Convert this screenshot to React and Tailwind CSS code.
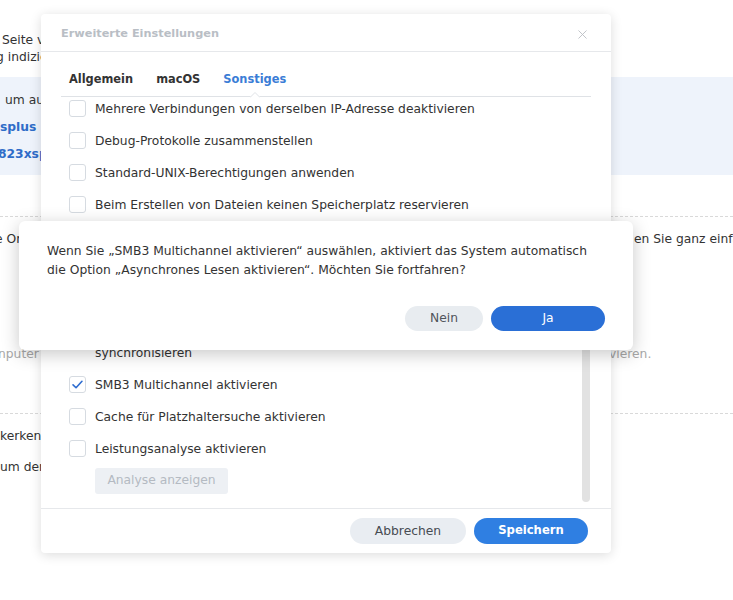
import { X } from "lucide-react";

const Checkbox = ({ checked }) => (
  <span className="mt-[1.5px] flex h-[17px] w-[17px] shrink-0 items-center justify-center rounded-[3px] border border-[#d6dbe1] bg-white">
    {checked && (
      <svg width="13" height="13" viewBox="0 0 16 16" fill="none">
        <path
          d="M2.5 8.5 L6.2 12 L13.5 4"
          stroke="#2f6dd0"
          strokeWidth="2"
          strokeLinecap="round"
          strokeLinejoin="round"
        />
      </svg>
    )}
  </span>
);

const Row = ({ checked, children }) => (
  <div className="flex items-start gap-[9px] py-[6px] leading-[20px]">
    <Checkbox checked={checked} />
    <div>{children}</div>
  </div>
);

const Background = () => (
  <div className="whitespace-nowrap">
    <div className="pt-[31.5px] leading-[17px]">
      <div className="h-[17px] pl-[2px]">Seite verwenden, um die Dateien</div>
      <div className="-ml-[4px] h-[17px]">g indiziert werden</div>
    </div>
    <div className="mt-[11.5px] h-[98px] bg-[#eef3fb] pt-[9.5px] leading-[27px]">
      <div className="pl-[5px]">um auf die Dateien zuzugreifen</div>
      <div className="font-bold text-[#2f6cc8]">splus</div>
      <div className="-ml-[2px] font-bold text-[#2f6cc8]">823xsplus</div>
    </div>
    <div className="mt-[41px] border-t border-dashed border-[#d9d9d9]" />
    <div className="mt-[13.5px] flex h-[17px] leading-[17px]">
      <div className="w-[634px] shrink-0 overflow-hidden">
        <span className="-ml-[5px] inline-block">e Ordner freigeben</span>
      </div>
      <div>en Sie ganz einfach</div>
    </div>
    <div className="mt-[98px] flex h-[17px] leading-[17px] text-[#a8a8a8]">
      <div className="w-[609px] shrink-0 overflow-hidden">
        <span className="-ml-[2px] inline-block">nputer</span>
      </div>
      <div>vieren.</div>
    </div>
    <div className="mt-[50.5px] border-t border-dashed border-[#d9d9d9]" />
    <div className="mt-[14px] h-[17px] leading-[17px]">kerkennung</div>
    <div className="mt-[14px] h-[17px] leading-[17px]">um den Zugriff</div>
  </div>
);

const SettingsDialog = () => (
  <div className="absolute left-[41px] top-[14px] flex h-[539px] w-[570px] flex-col rounded-[4px] bg-white shadow-[0_2px_12px_rgba(0,0,0,0.14)]">
    <div className="flex h-[38px] shrink-0 items-center justify-between border-b border-[#e6e8eb] pl-[20px] pr-[21px] pt-[3px]">
      <span className="text-[11.3px] font-bold text-[#b9bec5]">Erweiterte Einstellungen</span>
      <X size={15} strokeWidth={1.4} className="text-[#b9bdc2]" />
    </div>
    <div className="mx-[20px] flex h-[45px] shrink-0 gap-[23px] border-b border-[#dfe2e6] pl-[8px] pt-[19px] text-[11.4px] font-bold leading-[17px]">
      <span>Allgemein</span>
      <span>macOS</span>
      <span className="relative text-[#3b7dd6]">
        Sonstiges
        {/* small caret in the tab line under the active tab */}
        <svg
          className="absolute left-1/2 top-[20px] -translate-x-1/2"
          width="10"
          height="7"
          viewBox="0 0 10 7"
        >
          <rect x="0.5" y="5" width="9" height="2" fill="#fff" />
          <polyline points="0,6.5 5,1.5 10,6.5" fill="#fff" stroke="#dfe2e6" strokeWidth="1" />
        </svg>
      </span>
    </div>
    <div className="flex min-h-0 flex-1 overflow-hidden">
      <div className="flex-1 pl-[28px]">
        <div className="-mt-[4.5px]">
          <Row>Mehrere Verbindungen von derselben IP-Adresse deaktivieren</Row>
          <Row>Debug-Protokolle zusammenstellen</Row>
          <Row>Standard-UNIX-Berechtigungen anwenden</Row>
          <Row>Beim Erstellen von Dateien keinen Speicherplatz reservieren</Row>
          <Row>Asynchrones Lesen aktivieren</Row>
          <Row>Opportunistisches Sperren aktivieren</Row>
          <Row>SMB2-Lease aktivieren</Row>
          <Row>
            <div>Änderungszeitpunkt von Dateien mit dem Server</div>
            <div>synchronisieren</div>
          </Row>
          <Row checked>SMB3 Multichannel aktivieren</Row>
          <Row>Cache für Platzhaltersuche aktivieren</Row>
          <Row>Leistungsanalyse aktivieren</Row>
          <button className="ml-[26px] mt-[3px] h-[26px] w-[133px] rounded-[3px] bg-[#edf0f4] text-[#b4bac2]">
            Analyse anzeigen
          </button>
        </div>
      </div>
      <div className="mr-[21px] w-[8px] shrink-0">
        <div className="mt-[150px] h-[255px] rounded-full bg-[#e2e2e2]" />
      </div>
    </div>
    <div className="flex h-[45px] shrink-0 items-center justify-end gap-[8px] border-t border-[#e6e8eb] pr-[23px]">
      <button className="h-[26px] w-[116px] rounded-full bg-[#e9edf2] text-[#474c52]">
        Abbrechen
      </button>
      <button className="h-[26px] w-[114px] rounded-full bg-[#2f7fe2] text-[11.6px] font-bold text-white">
        Speichern
      </button>
    </div>
  </div>
);

const ConfirmDialog = () => (
  <div className="absolute left-[19px] top-[221px] h-[129px] w-[614px] rounded-[6px] bg-white px-[28px] pt-[21px] shadow-[0_4px_18px_rgba(0,0,0,0.22)]">
    <p className="leading-[19px] text-[#333]">
      Wenn Sie „SMB3 Multichannel aktivieren“ auswählen, aktiviert das System automatisch
      <br />
      die Option „Asynchrones Lesen aktivieren“. Möchten Sie fortfahren?
    </p>
    <div className="mt-[26px] flex justify-end gap-[8px]">
      <button className="h-[25px] w-[78px] rounded-full bg-[#e8ecf0] text-[#50555b]">
        Nein
      </button>
      <button className="h-[25px] w-[114px] rounded-full bg-[#2a6fd6] text-white">
        Ja
      </button>
    </div>
  </div>
);

export default function App() {
  return (
    <div className="relative h-[600px] w-[733px] overflow-hidden bg-white font-['DejaVu_Sans',sans-serif] text-[12.3px] text-[#333]">
      <Background />
      <SettingsDialog />
      <ConfirmDialog />
    </div>
  );
}
